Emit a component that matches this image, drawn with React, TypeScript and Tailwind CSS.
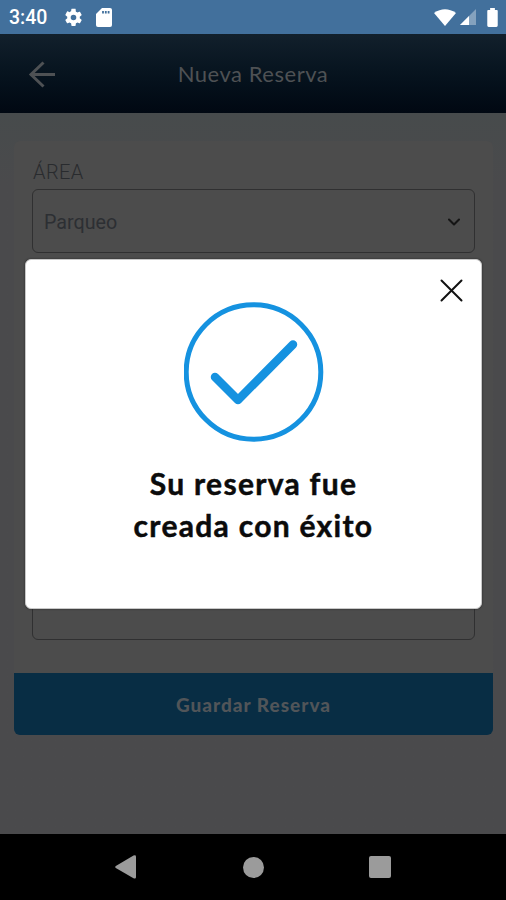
import { ChevronDown } from "lucide-react";

function StatusBar() {
  return (
    <div className="flex h-[34px] shrink-0 items-center bg-[#42709c] px-2 text-white">
      <span className="ml-px w-[54px] pt-px font-['Roboto',sans-serif] text-[19.500px] font-medium leading-none">3:40</span>
      <svg className="h-[21px] w-[21px]" viewBox="0 0 24 24" fill="currentColor">
        <path d="M19.14 12.94c.04-.3.06-.61.06-.94s-.02-.64-.07-.94l2.03-1.58a.49.49 0 0 0 .12-.61l-1.92-3.32a.49.49 0 0 0-.59-.22l-2.39.96a7 7 0 0 0-1.62-.94l-.36-2.54A.48.48 0 0 0 13.92 2h-3.84a.48.48 0 0 0-.47.41l-.36 2.54c-.59.24-1.13.57-1.62.94l-2.39-.96a.49.49 0 0 0-.59.22L2.74 8.87a.48.48 0 0 0 .12.61l2.03 1.58a7.5 7.5 0 0 0 0 1.88l-2.03 1.58a.49.49 0 0 0-.12.61l1.92 3.32c.12.22.37.29.59.22l2.39-.96c.5.38 1.03.7 1.62.94l.36 2.54c.05.24.24.41.48.41h3.84c.24 0 .44-.17.47-.41l.36-2.54a7 7 0 0 0 1.62-.94l2.39.96c.22.08.47 0 .59-.22l1.92-3.32a.48.48 0 0 0-.12-.61zM12 15.200a3.200 3.200 0 1 1 0-6.400 3.200 3.200 0 0 1 0 6.400z" />
      </svg>
      <svg className="ml-3 h-[19px] w-4" viewBox="0 0 16 19">
        <path d="M6 0h8a2 2 0 0 1 2 2v15a2 2 0 0 1-2 2H2a2 2 0 0 1-2-2V6z" fill="currentColor" />
        <path d="M7 3v2.500M9.800 3v2.500M12.600 3v2.500" stroke="#42709c" strokeWidth="1.800" />
      </svg>
      <svg className="ml-auto h-[17px] w-[22px]" viewBox="0 0 22 17" fill="currentColor">
        <path d="M0 4Q11-3.500 22 4L11 17z" />
      </svg>
      <svg className="ml-[4px] h-4 w-4" viewBox="0 0 16 16" fill="currentColor">
        <path d="M0 16 16 0v16z" opacity="0.350" />
        <path d="M0 16 9 7v9z" />
      </svg>
      <svg className="ml-[11px] h-[19px] w-[11px]" viewBox="0 0 11 20" fill="currentColor">
        <path d="M3 0h5v2h2q1 0 1 1v15.500q0 1.500-1.500 1.500h-8Q0 20 0 18.500V3q0-1 1-1h2z" />
      </svg>
    </div>
  );
}

function Header() {
  return (
    <header className="grid h-[79px] shrink-0 grid-cols-[1fr_auto_1fr] items-center bg-linear-to-b from-[#12202c] to-[#010812] text-[#4e5154]">
      <svg className="ml-[28px] mt-px h-[27px] w-[28px]" viewBox="0 0 28 27" fill="none" stroke="currentColor" strokeWidth="3">
        <path d="M15.500 1.500 3 13.500l12.500 12M3 13.500h24" />
      </svg>
      <h1 className="font-['Lato',sans-serif] text-[22px] tracking-[0.530px]">Nueva Reserva</h1>
    </header>
  );
}

function ReservationForm() {
  return (
    <form className="mx-[13px] ml-[14px] flex h-[594px] flex-col overflow-hidden rounded-md bg-[#4c4c4c]">
      <label className="ml-[19px] mt-[18px] h-[30px] font-['Roboto',sans-serif] text-[20px] font-light leading-[26px] tracking-[0.400px] text-[#292b2e]">ÁREA</label>
      <div className="ml-[18px] mr-[18px] flex h-[64px] shrink-0 items-center justify-between rounded-md border-[1.500px] border-[#303031] pl-[11px] pr-2.5">
        <span className="pt-[3px] font-['Roboto',sans-serif] text-[19.700px] text-[#2c2f33]">Parqueo</span>
        <ChevronDown size={20} strokeWidth={2.500} className="mt-0.5 text-[#151515]" />
      </div>
      <div className="mx-[18px] mt-auto h-[64px] shrink-0 rounded-md border-[1.500px] border-[#303031]" />
      <button type="button" className="mt-[33px] h-[62px] shrink-0 rounded-b-[4px] bg-[#082d44] pt-0.5 font-['Lato',sans-serif] text-[19px] font-black tracking-[1px] text-[#515559]">
        Guardar Reserva
      </button>
    </form>
  );
}

function SuccessDialog() {
  return (
    <div role="dialog" className="absolute left-[25px] top-[259px] flex h-[350px] w-[457px] flex-col items-center rounded-[6px] border border-[#c8c8c8] bg-white shadow-[0_0_2px_#222]">
      <button type="button" aria-label="Cerrar" className="absolute right-[18px] top-[19px] text-[#111]">
        <svg className="h-[23px] w-[23px]" viewBox="0 0 23 23" stroke="currentColor" strokeWidth="2" strokeLinecap="round">
          <path d="M1.500 1.500 21.500 21.500M21.500 1.500 1.500 21.500" />
        </svg>
      </button>
      <svg className="mt-[42px] h-[140px] w-[140px] shrink-0" viewBox="0 0 140 140" fill="none" stroke="#1592e0">
        <circle cx="69.500" cy="70" r="67.300" strokeWidth="5" />
        <path d="M31 75 54 98 109 42.500" strokeWidth="8.500" strokeLinecap="round" strokeLinejoin="round" />
      </svg>
      <p className="mt-5 text-center font-['Lato',sans-serif] text-[30px] font-bold leading-[42px] tracking-[1.300px] text-[#0b0b0b] [-webkit-text-stroke:0.500px_#0b0b0b]">
        Su reserva fue
        <br />
        creada con éxito
      </p>
    </div>
  );
}

function NavigationBar() {
  return (
    <nav className="flex h-[66px] shrink-0 items-center justify-between bg-black pl-[115px] pr-[115px] text-[#9b9b9b]">
      <svg className="h-6 w-[21px]" viewBox="0 0 21 24" fill="currentColor">
        <path d="M.8 11 18.500.600Q21-.3 21 1.800v20.400Q21 24.300 18.500 23.300L.8 13Q-.4 12 .8 11z" />
      </svg>
      <span className="ml-[2px] h-[21px] w-[21px] rounded-full bg-current" />
      <span className="h-[22px] w-[22px] rounded-xs bg-current" />
    </nav>
  );
}

export default function App() {
  return (
    <div className="relative flex h-[900px] w-[506px] flex-col overflow-hidden">
      <StatusBar />
      <Header />
      <main className="flex-1 bg-linear-to-b from-[#474b4c] to-[#4a4a4c] to-10% pt-[28px]">
        <ReservationForm />
      </main>
      <NavigationBar />
      <SuccessDialog />
    </div>
  );
}
